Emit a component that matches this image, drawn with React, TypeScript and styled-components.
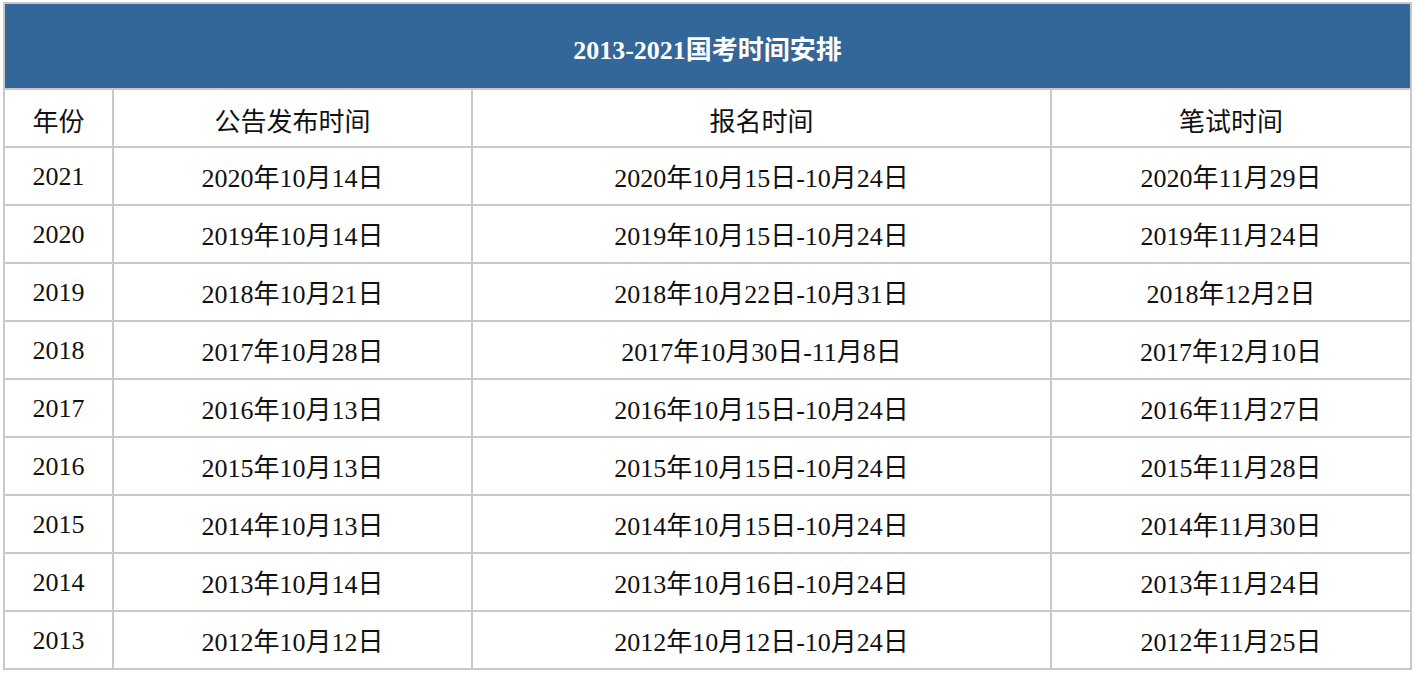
import styled, { createGlobalStyle } from "styled-components";

const GlobalStyle = createGlobalStyle`
    body {
        margin: 0;
        background: #ffffff;
    }
`

const Page = styled.div`
    padding: 2px 3px;
`

const Board = styled.div`
    display: grid;
    grid-template-columns: 107px 357px 577px 358px;
    grid-template-rows: 84px repeat(10, 56px);
    gap: 2px;
    width: 1409px;
    padding: 2px;
    box-sizing: border-box;
    background-color: #c8c8c8;
    font-family: "Liberation Serif", "Noto Sans CJK SC", serif;
    font-size: 26px;
    color: #111111;
`

const Title = styled.div`
    grid-column: 1 / -1;
    display: flex;
    align-items: center;
    justify-content: center;
    padding-top: 2px;
    background-color: #336699;
    color: #ffffff;
    font-weight: bold;
`

// $nudge: positive moves text down, negative moves it up
const Cell = styled.div<{ $nudge: number }>`
    display: flex;
    align-items: center;
    justify-content: center;
    background-color: #ffffff;
    white-space: nowrap;
    box-sizing: border-box;
    padding-top: ${p => (p.$nudge > 0 ? p.$nudge : 0)}px;
    padding-bottom: ${p => (p.$nudge < 0 ? -p.$nudge : 0)}px;
`

const HEADERS = ["年份", "公告发布时间", "报名时间", "笔试时间"];

const ROWS = [
    ["2021", "2020年10月14日", "2020年10月15日-10月24日", "2020年11月29日"],
    ["2020", "2019年10月14日", "2019年10月15日-10月24日", "2019年11月24日"],
    ["2019", "2018年10月21日", "2018年10月22日-10月31日", "2018年12月2日"],
    ["2018", "2017年10月28日", "2017年10月30日-11月8日", "2017年12月10日"],
    ["2017", "2016年10月13日", "2016年10月15日-10月24日", "2016年11月27日"],
    ["2016", "2015年10月13日", "2015年10月15日-10月24日", "2015年11月28日"],
    ["2015", "2014年10月13日", "2014年10月15日-10月24日", "2014年11月30日"],
    ["2014", "2013年10月14日", "2013年10月16日-10月24日", "2013年11月24日"],
    ["2013", "2012年10月12日", "2012年10月12日-10月24日", "2012年11月25日"],
]

export default function App() {
    return (
        <Page>
            <GlobalStyle />
            <Board>
                <Title>2013-2021国考时间安排</Title>
                {HEADERS.map(h => (
                    <Cell $nudge={3} key={h}>{h}</Cell>
                ))}
                {ROWS.map(row =>
                    row.map((text, i) => (
                        <Cell $nudge={i === 0 ? 2 : -1} key={row[0] + "-" + i}>{text}</Cell>
                    ))
                )}
            </Board>
        </Page>
    )
}
